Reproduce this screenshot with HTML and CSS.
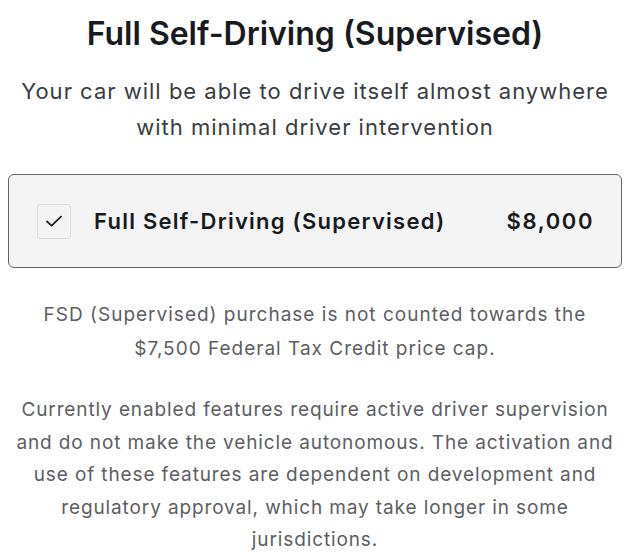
FILE: index.html
```html
<!DOCTYPE html>
<html lang="en">
<head>
  <meta charset="UTF-8"/>
  <meta name="viewport" content="width=device-width, initial-scale=1.0"/>
  <title>Full Self-Driving</title>
  <link rel="stylesheet" href="styles.css">
</head>
<body>

<div class="panel">
  <h1>Full Self-Driving (Supervised)</h1>
  <p class="lead">Your car will be able to drive itself almost anywhere<br>with minimal driver intervention</p>

  <label class="option">
    <span class="check">
      <svg width="18" height="18" viewBox="0 0 18 18"><path d="M2 9.5 L6.6 13.6 L16 4.6" fill="none" stroke="#222" stroke-width="1.8" stroke-linecap="round" stroke-linejoin="round"/></svg>
    </span>
    <span class="option-name">Full Self-Driving (Supervised)</span>
    <span class="option-price">$8,000</span>
  </label>

  <p class="note">FSD (Supervised) purchase is not counted towards the<br>$7,500 Federal Tax Credit price cap.</p>

  <p class="note disclaimer">Currently enabled features require active driver supervision<br>and do not make the vehicle autonomous. The activation and<br>use of these features are dependent on development and<br>regulatory approval, which may take longer in some<br>jurisdictions.</p>
</div>

</body>
</html>
```

FILE: styles.css
```css
body {
  font-family: Inter, 'Noto Sans', sans-serif;
  background: #fff;
  margin: 0;
  padding: 0;
}

.panel {
  width: 614px;
  margin: 0 auto;
  padding-top: 14px;
  text-align: center;
}

.panel h1 {
  margin: 0;
  font-size: 32px;
  font-weight: 600;
  line-height: 40px;
  color: #171a20;
}

.lead {
  margin: 19px 0 0;
  font-size: 22px;
  line-height: 36px;
  letter-spacing: 1px;
  color: #393c41;
}

.option {
  margin-top: 29px;
  height: 92px;
  display: flex;
  align-items: center;
  padding: 0 27px 0 28px;
  background: #f4f4f4;
  border: 1px solid #666;
  border-radius: 6px;
  text-align: left;
}

.check {
  width: 32px;
  height: 33px;
  border: 1px solid #ddd;
  border-radius: 3px;
  display: flex;
  align-items: center;
  justify-content: center;
  margin-right: 23px;
}

.option-name {
  flex: 1;
  font-size: 22px;
  font-weight: 600;
  letter-spacing: 1.25px;
  color: #171a20;
}

.option-price {
  font-size: 22px;
  font-weight: 600;
  letter-spacing: 1.6px;
  color: #171a20;
}

.note {
  margin: 30px 0 0;
  font-size: 19px;
  line-height: 34px;
  letter-spacing: 1px;
  color: #5c5e62;
}

.note.disclaimer {
  margin-top: 28px;
  line-height: 32.5px;
  letter-spacing: 0.88px;
}
```
